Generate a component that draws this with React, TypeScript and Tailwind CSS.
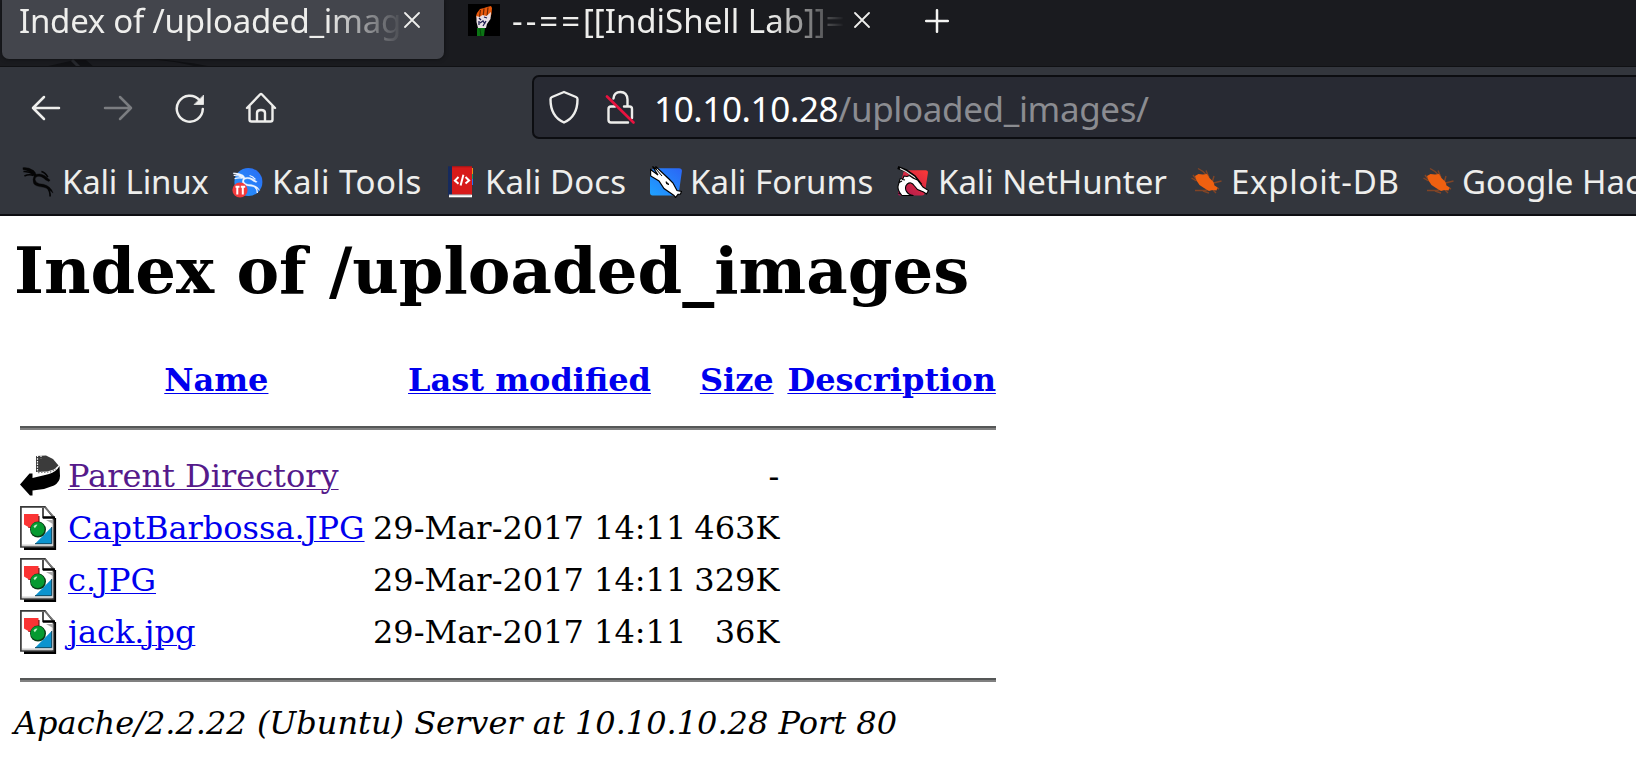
import React from "react";

const uiFont = "font-['Noto_Sans',sans-serif]";

function CloseIcon() {
  return (
    <svg width="16" height="16" viewBox="0 0 16 16" className="shrink-0" fill="none" stroke="#eeeeec" strokeWidth="1.8" strokeLinecap="round">
      <path d="M1 1l14 14M15 1L1 15" />
    </svg>
  );
}

function FistIcon() {
  return (
    <svg width="32" height="32" viewBox="0 0 32 32" className="shrink-0">
      <rect width="32" height="32" fill="#000" />
      <path d="M9 9l3-4 4-1 3-1 4-1 1 2-.5 6-1 3-3 2H9l-1-3z" fill="#e8590c" />
      <path d="M12.500 6l-1 7M16 4.500l-1 9M20 3.500l-1 9" stroke="#6b2500" strokeWidth="1.200" />
      <path d="M8.500 12l3 1 3-2 4 1 4.500-4-.5 7-3.500 5-1 4H10l-1.500-6z" fill="#e9e0e4" />
      <path d="M11 14l2 2M16 13l3 1M12 19l3-2 2 3M11 17v4M15 22l3-5" stroke="#1d1d50" strokeWidth="1.300" fill="none" />
      <path d="M9 24h8l-1 8H9z" fill="#0b7414" />
      <path d="M12 25l1 7" stroke="#044a08" />
    </svg>
  );
}

const dragon = (
  <>
    <path d="M1 1.200Q7 .600 12 4.200Q14 6 14.600 8.400L12.800 10Q11 6.800 7 5.200Q4 3.200 1 3z" />
    <path d="M1.500 5.200Q7 4.800 12 8M2.500 9.800Q7 7.600 12 9.200" fill="none" strokeWidth="1.700" />
    <path d="M13 9Q18 6.200 23.500 9.600L29 14.200L27.600 15.400Q24 14 22.500 12.200Q17.500 8.400 14 11.400Q12.500 13.800 15 16.400Q17 18.200 22 18.400Q29.500 20 32 27.400Q27.500 22.400 22.500 21.400Q13.500 20.600 12 17.400Q10.400 13 13 9z" />
    <path d="M20 5.200Q24 6.200 26.600 11M26 21.400Q29.200 25.400 29 31" fill="none" strokeWidth="1.700" />
  </>
);

function KaliIcon() {
  return (
    <svg width="32" height="32" viewBox="0 0 33 32" className="shrink-0" fill="#050506" stroke="#050506" strokeWidth=".4">
      {dragon}
    </svg>
  );
}

function ToolsIcon() {
  return (
    <svg width="32" height="32" viewBox="0 0 32 32" className="shrink-0">
      <defs>
        <linearGradient id="tools" x1="0" y1="1" x2="1" y2="0">
          <stop offset="0" stopColor="#2497fb" />
          <stop offset="1" stopColor="#2b6cf6" />
        </linearGradient>
      </defs>
      <circle cx="16.400" cy="16" r="14" fill="url(#tools)" />
      <g transform="translate(.4 6) scale(.86 .68)" fill="#eef4ff" stroke="#eef4ff" strokeWidth=".2">
        {dragon}
      </g>
      <circle cx="8" cy="24" r="7.600" fill="#f23a3c" />
      <path d="M3.500 20.700H7.500M5.300 21v7.500M8.800 20.700h4.400M10.800 21v7.500" stroke="#fff" strokeWidth="2" />
    </svg>
  );
}

function DocsIcon() {
  return (
    <svg width="25" height="32" viewBox="0 0 25 32" className="shrink-0">
      <path d="M22 2h3v6h-3z" fill="#f29018" />
      <path d="M22 8h3v5h-3z" fill="#159a67" />
      <path d="M22 13h3v6h-3z" fill="#2b6cf6" />
      <path d="M0 .3h5v29H0z" fill="#162a5d" />
      <path d="M4 .3h20v28.400H4z" fill="#d71a1a" />
      <path d="M4 .3h20v1H4z" fill="#a51416" />
      <path d="M1 28.700h23v2.600H1z" fill="#fff" />
      <path d="M1 29h22" stroke="#9da1a8" strokeWidth=".7" />
      <path d="M10.500 11l-3.600 3.600 3.600 3.200M17.500 11l3.600 3.400-3.600 3.200M15.400 8.800l-2.800 10.600" stroke="#fff" strokeWidth="2" fill="none" />
    </svg>
  );
}

function ForumsIcon() {
  return (
    <svg width="32" height="32" viewBox="0 0 32 32" className="shrink-0">
      <defs>
        <linearGradient id="forums" x1="0" y1="1" x2="1" y2="0">
          <stop offset="0" stopColor="#1fa2ff" />
          <stop offset="1" stopColor="#2b65f5" />
        </linearGradient>
      </defs>
      <path d="M4 2.200h25q3.200 0 2.900 3l-3 21q-.4 3.200-3.600 3.200H2.600Q0 29.400 0 26.500V5z" fill="url(#forums)" />
      <path d="M.5 3.500L8 9 2.500.5 6 3V.8L19 13 23 17 27 24.500 31.500 25.500 30.500 28 28 28.300 25.500 31.500 24 29.500 14 22.500 9 15 .7 10z" fill="#fff" stroke="#000" strokeWidth="1.200" />
      <path d="M6 3l6 7M16 15.700l3 2.800-2.400-.7z" fill="#000" stroke="#000" strokeWidth="1" />
    </svg>
  );
}

function NetHunterIcon() {
  return (
    <svg width="32" height="32" viewBox="0 0 32 32" className="shrink-0">
      <defs>
        <linearGradient id="nh" x1="0" y1="1" x2="1" y2="0">
          <stop offset="0" stopColor="#a81652" />
          <stop offset="1" stopColor="#ff3a36" />
        </linearGradient>
      </defs>
      <path d="M7 4.200h21.500q2.800 0 2.400 2.800l-3 19.800q-.4 2.700-3 2.700H2.600Q1 29.500 1 27z" fill="url(#nh)" />
      <path d="M.8 1.500L9 4.500 17.500 10.500 24 19" stroke="#000" strokeWidth="3" fill="none" />
      <path d="M3 2.500L9 5.500 17 11 23 18" stroke="#e8e8e8" strokeWidth="1.100" fill="none" />
      <path d="M5 29.500Q-.5 23.500 1.500 18.500L3 13 6 12.500 7 10 10 10.500 12.500 9.500 16 12 20.500 14 26 21 31.500 24.500 29.500 28 26.500 26 20.500 23.500 17.500 20Q14 15 10.300 18Q7.500 20.500 9 24.500Q11 29 16.500 29.500z" fill="#fff" stroke="#000" strokeWidth="1.100" />
      <path d="M1.500 27l1.200.6M2 16.500l3-1.500M5 13.500l3 .5" stroke="#000" strokeWidth="1.200" />
    </svg>
  );
}

function BugIcon() {
  return (
    <svg width="32" height="32" viewBox="0 0 32 32" className="shrink-0">
      <g stroke="#9b4a1f" strokeWidth="1.400" fill="none" opacity=".75">
        <path d="M8 2.500l5 3 4 4M16 4.500l3 7M1.500 12l5 3M24 10l-2 7M31.500 15l-8 2M5 24.500h10l6-2M13 25l6 2M22 23l4 4M3 9l3 4M25 21l4 2" />
      </g>
      <path d="M5 10L8.500 8l4.500.500 4-.5 2.500 4 4 4 1 3.500 3 2-1 3-4-.5-3.500 1-5-3-4.500-3-3-4.500z" fill="#ee6010" />
    </svg>
  );
}

function BackArrow() {
  return (
    <svg width="40" height="44" viewBox="0 0 40 44" className="block">
      <path d="M16 2L26 1.500 33 5 38.500 11.500 34 15.500 27 17.500 16 18z" fill="#3b3b3b" />
      <path d="M17.500 1.500v17M21 1.500v3" stroke="#fff" strokeWidth="1.200" strokeDasharray="1.500 1.200" />
      <path d="M18 18.500L30 18 36 15" stroke="#888" strokeWidth="1.500" strokeDasharray="1.500 1.500" fill="none" />
      <path d="M39.500 12Q36 18 29 20L23 21.500 12.500 24V19.500H9.500L0 30.500l10 11h2.500V36.500L24 35 34 31.500Q40 28 40 22z" fill="#000" />
    </svg>
  );
}

function ImageFile() {
  return (
    <svg width="40" height="44" viewBox="0 0 40 44" className="block">
      <path d="M4 42.500H34.700V12" stroke="#000" strokeWidth="2.800" fill="none" />
      <path d="M.9.900H25L33.500 11.500V41H.9z" fill="#fff" stroke="#383838" strokeWidth="1.700" />
      <path d="M2 39.300H32.500V14" fill="none" stroke="#cfcfcf" strokeWidth="1.500" />
      <path d="M23 2V11.500H34" fill="none" stroke="#333" strokeWidth="1.700" />
      <path d="M25 1.500L34 11" stroke="#777" strokeWidth="1.500" />
      <path d="M23 11.500H35" stroke="#000" strokeWidth="2.400" />
      <path d="M26 14h7v4z" fill="#a9a9a9" />
      <path d="M6 10h13.500V22H8.500z" fill="#4a1010" />
      <path d="M4 8h14.500v11.500L10 22 4 18.500z" fill="#fb3434" />
      <path d="M31.700 21v16.700H15z" fill="#0c94cf" />
      <path d="M31.700 21v16.700H15" fill="none" stroke="#06405c" strokeWidth="1" />
      <circle cx="18" cy="23.600" r="8" fill="#0a3a16" />
      <circle cx="17.600" cy="23" r="7" fill="#069a30" />
      <path d="M13.500 20.500q1.500-2.400 4-1.800l-2.600 3.600z" fill="#b9efc4" />
    </svg>
  );
}

const bookmarks = [
  { label: "Kali Linux", icon: <KaliIcon />, box: "w-[210px]", text: "ml-2 tracking-[-0.2px]" },
  { label: "Kali Tools", icon: <ToolsIcon />, box: "w-[212px]", text: "ml-2 tracking-[0.5px]" },
  { label: "Kali Docs", icon: <span className="flex w-8 justify-center"><DocsIcon /></span>, box: "w-[206px]", text: "ml-[9px] tracking-[0.1px]" },
  { label: "Kali Forums", icon: <ForumsIcon />, box: "w-[247px]", text: "ml-2 tracking-[0.1px]" },
  { label: "Kali NetHunter", icon: <NetHunterIcon />, box: "w-[293px]", text: "ml-[9px] tracking-[-0.05px]" },
  { label: "Exploit-DB", icon: <BugIcon />, box: "w-[232px]", text: "ml-[9px] tracking-[0.75px]" },
  { label: "Google Hacking DB", icon: <BugIcon />, box: "w-[360px]", text: "ml-2" },
];

const files = [
  { name: "CaptBarbossa.JPG", date: "29-Mar-2017 14:11", size: "463K" },
  { name: "c.JPG", date: "29-Mar-2017 14:11", size: "329K" },
  { name: "jack.jpg", date: "29-Mar-2017 14:11", size: "36K" },
];

function Rule() {
  return (
    <tr>
      <th colSpan={5} className="p-[2px]">
        <div className="my-4 h-1 border-y-2 border-t-[#555757] border-b-[#808080]" />
      </th>
    </tr>
  );
}

const underlined = "underline decoration-1 underline-offset-2";
const link = `text-[#0000ee] ${underlined}`;

export default function App() {
  return (
    <div className="h-[773px] w-[1636px] overflow-hidden bg-white">
      <div className={`h-[216px] border-b-2 border-[#0d0d12] bg-[#33363d] text-[#eeeeec] ${uiFont}`}>
        <div className="relative flex h-[67px] overflow-hidden border-b border-[#101114] bg-[#1a1b1f] pl-[2px]">
          <svg width="240" height="8" viewBox="0 0 240 8" className="absolute top-[59px] left-0">
            <path d="M44 8L75 1H86L94 8z" fill="#101114" />
            <path d="M72 1l7 7" stroke="#26282d" strokeWidth="3" />
            <path d="M150 0Q185 2 212 8H198Q180 3 150 0z" fill="#101114" />
          </svg>
          <div className="relative flex h-[59px] w-[442px] shrink-0 rounded-b-[7px] bg-[#43454c] pl-[17px] shadow-[0_0_4px_rgba(0,0,0,0.5)]">
            <div className="-mt-px h-[46px] w-[385px] overflow-hidden text-[33px] leading-[44px] tracking-[-0.25px] whitespace-nowrap [mask-image:linear-gradient(to_right,#000_80%,transparent_100%)]">
              Index of /uploaded_images
            </div>
            <div className="pt-3"><CloseIcon /></div>
          </div>
          <div className="flex h-[59px] w-[460px] shrink-0 pt-1 pl-6">
            <FistIcon />
            <div className="-mt-[5px] ml-[12px] h-[46px] w-[333px] overflow-hidden text-[33px] leading-[44px] whitespace-nowrap [mask-image:linear-gradient(to_right,#000_78%,transparent_100%)]">
              <span className="tracking-[3px]">--==</span>[[IndiShell Lab]]==--
            </div>
            <div className="ml-[9px] pt-2"><CloseIcon /></div>
          </div>
          <svg width="24" height="24" viewBox="0 0 24 24" className="mt-[9px] ml-[21px] shrink-0" stroke="#f4f4f2" strokeWidth="2.500" strokeLinecap="round">
            <path d="M12 1.200v21.600M1.200 12h21.600" />
          </svg>
        </div>

        <div className="flex h-[83px] items-start pt-2 pl-[30px]">
          <div className="flex h-[64px] w-[502px] shrink-0 items-center text-[#eeeeec]">
            <svg width="32" height="32" viewBox="0 0 32 32" fill="none" stroke="currentColor" strokeWidth="2.500" strokeLinecap="round" strokeLinejoin="round">
              <path d="M29 17H3M14 6L3 17l11 11" />
            </svg>
            <svg width="32" height="32" viewBox="0 0 32 32" className="ml-10 text-[#7b7d81]" fill="none" stroke="currentColor" strokeWidth="2.500" strokeLinecap="round" strokeLinejoin="round">
              <path d="M3 17h26M18 6l11 11-11 11" />
            </svg>
            <svg width="32" height="32" viewBox="0 0 32 32" className="ml-10" fill="none" stroke="currentColor" strokeWidth="2.500" strokeLinecap="round">
              <path d="M28.800 18A13 13 0 1 1 25.500 9" />
              <path d="M29.500 4.500V13.500H20.500z" fill="currentColor" strokeWidth="0.800" strokeLinejoin="round" />
            </svg>
            <svg width="32" height="32" viewBox="0 0 32 32" className="ml-[39px]" fill="none" stroke="currentColor" strokeWidth="2.400" strokeLinecap="round" strokeLinejoin="round">
              <path d="M2 17L15 3.500q1-1 2 0L30 17M4.500 15v13.500q0 2 2 2h19q2 0 2-2V15M12 30V22q0-3 4-3t4 3v8" />
            </svg>
          </div>
          <div className="-mr-24 flex h-[64px] w-[1200px] shrink-0 items-center rounded-[7px] border-2 border-[#0c0d11] bg-[#282a33] pl-[14px]">
            <svg width="32" height="34" viewBox="0 0 32 34" className="shrink-0" fill="none" stroke="currentColor" strokeWidth="2.400" strokeLinejoin="round">
              <path d="M16 2L28 7q1.500.6 1.500 2.300C29.500 20 26.500 28 16 32.500 5.500 28 2.500 20 2.500 9.300 2.500 7.600 4 7 4 7z" />
            </svg>
            <svg width="32" height="34" viewBox="0 0 32 34" className="ml-6 shrink-0" fill="none" stroke="currentColor" strokeWidth="2.400" strokeLinecap="round" strokeLinejoin="round">
              <path d="M9.500 8.500Q10 2 16.500 2T23.500 9.500V16M20 16.500h5.500q2.500 0 2.500 2.500V28M24 32.500H7q-2.500 0-2.500-2.500V19q0-2.500 2.500-2.500h4" />
              <path d="M3 6.500L29.500 32.500" stroke="#e8133f" strokeWidth="2.600" />
            </svg>
            <div className="ml-[18px] pt-[3px] text-[35px] leading-[57px] tracking-[-0.37px] whitespace-nowrap text-[#8b8c91]">
              <span className="text-white">10.10.10.28</span>/uploaded_images/
            </div>
          </div>
        </div>

        <div className="flex h-[64px] items-center pl-[22px]">
          {bookmarks.map((b) => (
            <div key={b.label} className={`flex shrink-0 items-center ${b.box}`}>
              {b.icon}
              <span className={`text-[33px] leading-[44px] whitespace-nowrap ${b.text}`}>{b.label}</span>
            </div>
          ))}
        </div>
      </div>

      <div className="pt-[17px] pl-[14px] font-['DejaVu_Serif',serif] text-[32px] leading-[38px] text-black">
        <h1 className="mb-[44px] text-[64px] leading-[75px] font-bold">Index of /uploaded_images</h1>
        <table className="w-[988px] border-separate border-spacing-[4px]">
          <tbody>
            <tr className="h-12">
              <th className="w-11 p-[2px]" />
              <th className="p-[2px]"><a className={link}>Name</a></th>
              <th className="p-[2px]"><a className={link}>Last modified</a></th>
              <th className="p-[2px]"><a className={link}>Size</a></th>
              <th className="p-[2px]"><a className={link}>Description</a></th>
            </tr>
            <Rule />
            <tr>
              <td className="p-[2px]"><BackArrow /></td>
              <td className="p-[2px]"><a className={`text-[#551a8b] ${underlined}`}>Parent Directory</a></td>
              <td className="p-[2px]" />
              <td className="p-[2px] text-right">-</td>
              <td className="p-[2px]" />
            </tr>
            {files.map((f) => (
              <tr key={f.name}>
                <td className="p-[2px]"><ImageFile /></td>
                <td className="p-[2px]"><a className={link}>{f.name}</a></td>
                <td className="p-[2px] text-right">{f.date}</td>
                <td className="p-[2px] text-right">{f.size}</td>
                <td className="p-[2px]" />
              </tr>
            ))}
            <Rule />
          </tbody>
        </table>
        <address className="italic">Apache/2.2.22 (Ubuntu) Server at 10.10.10.28 Port 80</address>
      </div>
    </div>
  );
}
